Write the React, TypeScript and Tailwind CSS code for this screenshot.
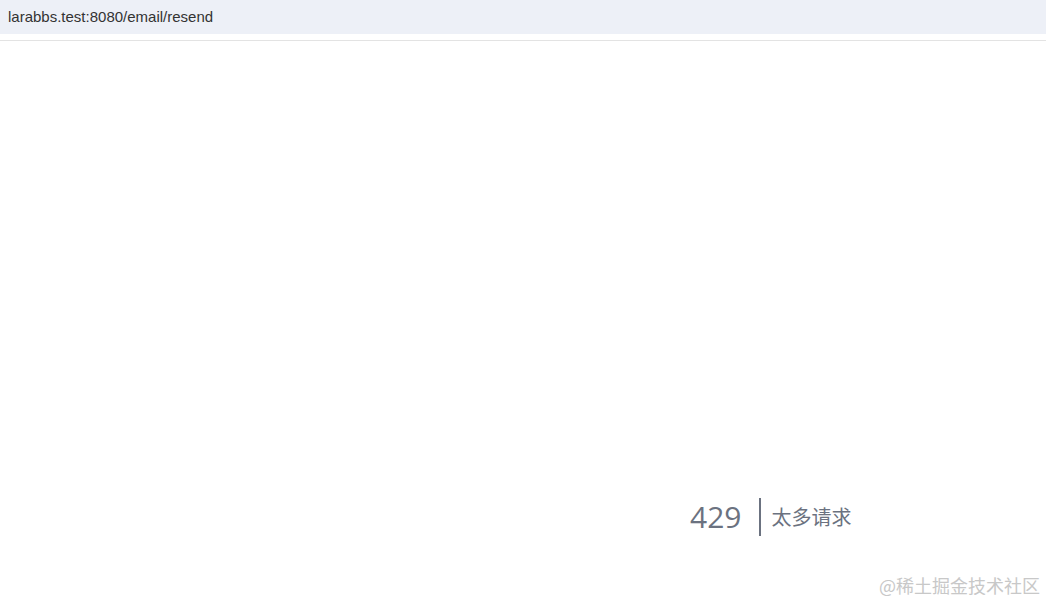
export default function App() {
  return (
    <div className="w-[1046px] h-[604px] bg-white flex flex-col overflow-hidden" style={{ fontFamily: '"Liberation Sans", "Noto Sans CJK SC", sans-serif' }}>
      <div className="h-[34px] bg-[#edf0f7] flex items-center pl-[8px] text-[15px] text-[#333]">
        larabbs.test:8080/email/resend
      </div>
      <div className="h-[6px]" />
      <div className="h-[1px] bg-[#e3e3e3]" />
      <div className="flex-1 flex flex-col">
        <div className="h-[457px]" />
        <div className="flex items-center pl-[690px] h-[38px]">
          <div className="text-[30px] text-[#6b7280] pr-[18px] leading-none" style={{ fontFamily: '"Open Sans", "Noto Sans", sans-serif' }}>429</div>
          <div className="w-[2px] h-[38px] bg-[#6b7280]" />
          <div className="pl-[10px] text-[20px] text-[#6b7280] leading-none" style={{ fontFamily: '"Noto Sans CJK SC", sans-serif' }}>太多请求</div>
        </div>
        <div className="flex-1 flex items-end justify-end pr-[6px] pb-[5px]">
          <div className="text-[18px] text-[#c8c8c8]" style={{ fontFamily: '"Noto Sans CJK SC", sans-serif' }}>@稀土掘金技术社区</div>
        </div>
      </div>
    </div>
  );
}
